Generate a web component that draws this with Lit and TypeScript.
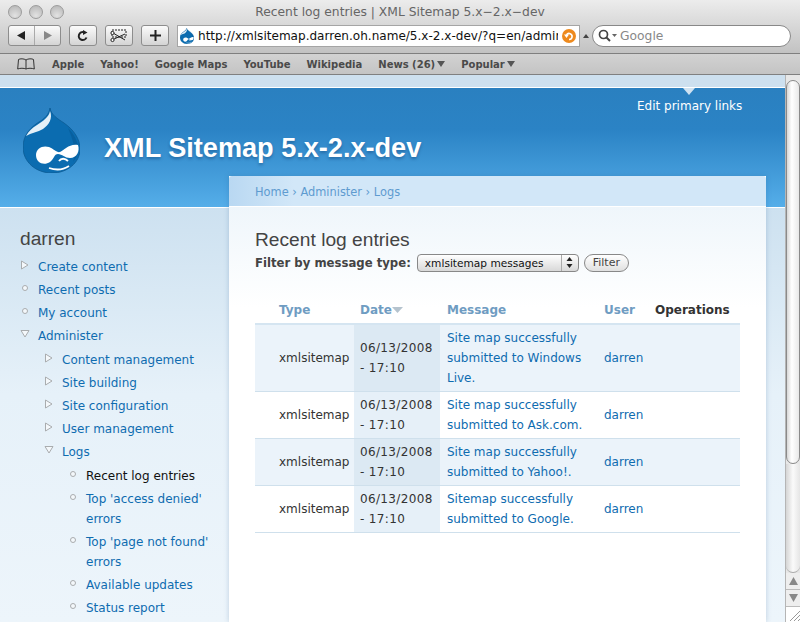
import { LitElement, html, css, svg } from "lit";
import { customElement } from "lit/decorators.js";

const drop = (w: number, h: number) => html`<svg width=${w} height=${h} viewBox="0 0 57 65" class="drop">
  <path d="M27 0 C28 7 35 11 41 15 C51 22 57 31 57 41 C57 55 44 65 29 65 C13 65 0 54 0 39 C0 27 8 19 16 14 C21 11 26 7 27 0Z" fill="#0b6cb0" stroke="#0b5a93" stroke-width=".8"/>
  <path d="M45 20 C51 26 55 33 55 41 C55 47 53 50 50 54 C53 46 52 36 45 20Z" fill="#075b98" opacity=".7"/>
  <path d="M27 3 C26 9 20 13 14 17 C9 20 6 23 3 28 C8 25 15 24 20 21 C26 17 30 10 27 3Z" fill="#e4f0f8"/>
  <path d="M13 47 C13 40 20 37 26 39 C31 41 34 45 37 44 C41 42 47 35 55 37 C57 43 54 50 47 50 C42 50 39 46 35 46 C31 46 31 51 27 54 C21 58 13 55 13 47Z" fill="#fff"/>
  <path d="M26 60 C32 62 40 62 46 58 M36 53 C38 50 42 50 45 53" fill="none" stroke="#fff" stroke-width="1.8"/>
</svg>`;

const tri = svg`<path d="M1.5 1 L8 5 L1.5 9 Z" fill="#f4f8fb" stroke="#a9acae" stroke-width="1"/>`;
const triDown = svg`<path d="M1 1.5 L9 1.5 L5 8 Z" fill="#f4f8fb" stroke="#a9acae" stroke-width="1"/>`;
const circ = svg`<circle cx="5" cy="5" r="2.5" fill="#f4f8fb" stroke="#a9acae" stroke-width="1"/>`;

type Item = { t: string; k: "r" | "d" | "c"; on?: boolean; kids?: Item[] };
const menu: Item[] = [
  { t: "Create content", k: "r" },
  { t: "Recent posts", k: "c" },
  { t: "My account", k: "c" },
  {
    t: "Administer", k: "d", kids: [
      { t: "Content management", k: "r" },
      { t: "Site building", k: "r" },
      { t: "Site configuration", k: "r" },
      { t: "User management", k: "r" },
      {
        t: "Logs", k: "d", kids: [
          { t: "Recent log entries", k: "c", on: true },
          { t: "Top 'access denied' errors", k: "c" },
          { t: "Top 'page not found' errors", k: "c" },
          { t: "Available updates", k: "c" },
          { t: "Status report", k: "c" },
        ],
      },
    ],
  },
];

const rows = [
  "Site map successfully submitted to Windows Live.",
  "Site map successfully submitted to Ask.com.",
  "Site map successfully submitted to Yahoo!.",
  "Sitemap successfully submitted to Google.",
];

@customElement("app-root")
export class AppRoot extends LitElement {
  static styles = css`
    :host { display: block; width: 800px; height: 622px; overflow: hidden; font-family: "DejaVu Sans", Verdana, sans-serif; }
    a { color: #0f6cb0; text-decoration: none; }
    .chrome { height: 75px; display: flex; flex-direction: column; }
    .top { height: 54px; box-sizing: border-box; background: linear-gradient(#ececec, #c2c2c2); border-bottom: 1px solid #7f7f7f; display: flex; flex-direction: column; }
    .title { height: 23px; display: flex; position: relative; }
    .lights { display: flex; gap: 7px; padding: 5px 0 0 8px; }
    .lights i { width: 14px; height: 14px; box-sizing: border-box; border-radius: 50%; background: radial-gradient(circle at 50% 80%, #e2e2e2, #b4b4b4); border: 1px solid #9c9c9c; }
    .ttext { position: absolute; left: 0; right: 0; top: 3px; text-align: center; font: 12.3px/18px "DejaVu Sans", sans-serif; color: #666; }
    .tools { display: flex; align-items: center; height: 25px; padding-left: 8px; }
    .btn { height: 21px; box-sizing: border-box; border: 1px solid #8d8d8d; border-radius: 3px; background: linear-gradient(#fbfbfb, #d4d4d4); display: flex; align-items: center; justify-content: center; flex: none; }
    .seg { width: 53px; margin-right: 8px; }
    .seg span { flex: 1; height: 100%; display: flex; align-items: center; justify-content: center; }
    .seg span + span { border-left: 1px solid #aaa; }
    .b28 { width: 28px; margin-right: 8px; }
    .url { width: 403px; height: 22px; flex: none; box-sizing: border-box; background: #fff; border: 1px solid #a5a5a5; display: flex; align-items: center; padding-left: 2px; gap: 4px; font: 12.05px "DejaVu Sans", sans-serif; color: #111; overflow: hidden; white-space: nowrap; }
    .url .u { flex: 1; overflow: hidden; }
    .snap { width: 14px; height: 14px; border-radius: 50%; background: #ee8a1e; margin-right: 3px; flex: none; display: flex; align-items: center; justify-content: center; }
    .caret { width: 12px; flex: none; display: flex; justify-content: center; }
    .search { width: 199px; height: 22px; flex: none; box-sizing: border-box; border: 1px solid #888; border-radius: 11px; background: #fff; display: flex; align-items: center; padding-left: 5px; gap: 2px; font: 12.3px "DejaVu Sans", sans-serif; color: #888; }
    .marks { height: 21px; box-sizing: border-box; background: linear-gradient(#d2d2d2, #c4c4c4); border-bottom: 1px solid #808080; display: flex; align-items: center; padding-left: 17px; font: bold 10px "DejaVu Sans", sans-serif; color: #4a4a4a; white-space: nowrap; }
    .marks svg.bk { margin-right: 17px; }
    .marks span { margin-right: 16px; display: flex; align-items: center; }
    .marks span svg { margin-left: 2px; }
    .view { display: flex; height: 547px; }
    .page { flex: 1; min-width: 0; overflow: hidden; background: #fff; }
    .strip { height: 12px; background: #cde0ef; border-bottom: 1px solid #fff; }
    .head { height: 120px; box-sizing: border-box; background: linear-gradient(#2a80c0 0%, #2b83c5 35%, #55aee9 100%); border-bottom: 1px solid #fff; position: relative; display: flex; align-items: flex-start; padding: 20px 0 0 23px; }
    .head .drop { flex: none; }
    .head h1 { margin: 22px 0 0 24px; font: bold 27.1px/36px "Liberation Sans", Arial, sans-serif; color: #fff; text-shadow: 0 2px 3px rgba(0,40,90,.35); white-space: nowrap; }
    .edit { position: absolute; left: 637px; top: 10px; color: #fff; font: 12px/16px "DejaVu Sans", sans-serif; white-space: nowrap; }
    .notch { position: absolute; left: 683px; top: 0; width: 0; height: 0; border: 6px solid transparent; border-top: 7px solid #cfe2f1; border-bottom: 0; }
    .body { display: grid; grid-template-columns: 229px 537px 1fr; height: 414px; background: linear-gradient(#cde1f0, #e6f1f9 45%, #edf5fb); }
    .side { padding: 21px 0 0 20px; }
    .side h2 { margin: 0 0 5px; font: 19.2px/20px "Liberation Sans", Arial, sans-serif; color: #444; }
    ul { list-style: none; margin: 0; padding: 0; font: 12px/20px "DejaVu Sans", sans-serif; }
    ul ul { padding-left: 6px; margin-top: 1px; }
    li { position: relative; padding: 3px 0 0 18px; }
    li > svg { position: absolute; left: 0; top: 6px; }
    li.on > span { color: #111; }
    .main { margin-top: -32px; position: relative; display: flex; flex-direction: column; box-shadow: 0 0 5px rgba(40,90,140,.25); height: 446px; background: #fff; }
    .crumb { height: 31px; box-sizing: border-box; background: linear-gradient(90deg, #b9d8f2, #d2e7f8 12%, #d2e7f8); border-bottom: 1px solid #fff; padding-left: 26px; font: 11.4px/33px "DejaVu Sans", sans-serif; color: #5e9bd0; border-radius: 3px 3px 0 0; }
    .crumb a { color: #5e9bd0; }
    .content { flex: 1; padding: 23px 26px 0; background: linear-gradient(#eff6fb, #fff 100px); }
    .content h2 { margin: 0; font: 19.2px/20px "Liberation Sans", Arial, sans-serif; color: #444; }
    .filter { display: flex; align-items: center; height: 21px; margin-top: 2px; font: bold 11.7px "DejaVu Sans", sans-serif; color: #444; }
    .sel { margin-left: 6px; width: 162px; height: 18px; box-sizing: border-box; border: 1px solid #888; border-radius: 4px; background: linear-gradient(#fff, #d8d8d8); display: flex; align-items: center; justify-content: space-between; padding-left: 7px; font: 10.6px "DejaVu Sans", sans-serif; color: #111; }
    .sel b { width: 16px; border-left: 1px solid #aaa; height: 100%; display: flex; align-items: center; justify-content: center; }
    .fbtn { margin-left: 5px; width: 45px; height: 18px; box-sizing: border-box; border: 1px solid #888; border-radius: 9px; background: linear-gradient(#fff, #e0e0e0); text-align: center; font: 11px/16px "DejaVu Sans", sans-serif; color: #444; }
    table { border-collapse: collapse; table-layout: fixed; width: 485px; margin-top: 24px; font: 12px/20px "DejaVu Sans", sans-serif; color: #333; }
    th { font: bold 12px/20px "DejaVu Sans", sans-serif; color: #6f9cc2; text-align: left; height: 27px; padding: 0 0 0 7px; border-bottom: 2px solid #d5e5f1; box-sizing: border-box; white-space: nowrap; }
    th:first-child { padding-left: 24px; }
    th.d { padding-left: 6px; }
    th.dark { color: #333; }
    td { padding: 3px 6px 3px 7px; border-bottom: 1px solid #cfe0ec; }
    td:first-child { padding-left: 24px; }
    tr.odd td { background: #ebf3fa; }
    td.date { background: #e6f0f8; padding-left: 6px; padding-right: 0; letter-spacing: .35px; }
    tr.odd td.date { background: #dce9f3; }
    .w1 { width: 99px; } .w2 { width: 86px; } .w3 { width: 157px; } .w4 { width: 51px; } .w5 { width: 92px; }
    .bar { width: 15px; flex: none; background: #e7e7e7; display: flex; flex-direction: column; box-sizing: border-box; border-left: 1px solid #b5b5b5; }
    .sb-cap { height: 5px; flex: none; }
    .thumb { height: 384px; flex: none; border: 1px solid #8a8a8a; border-radius: 7px; background: linear-gradient(90deg, #d8d8d8, #fff 40%, #e8e8e8); box-sizing: border-box; }
    .track { flex: 1; background: linear-gradient(90deg, #d5d5d5, #fafafa 50%, #e5e5e5); border-radius: 0 0 7px 7px; border-bottom: 1px solid #aaa; }
    .arr { height: 17px; flex: none; box-sizing: border-box; display: flex; align-items: center; justify-content: center; background: #eee; border-bottom: 1px solid #bbb; }
    .grip { height: 15px; flex: none; background: #fff; display: flex; }
  `;

  items(list: Item[]): unknown {
    return html`<ul>${list.map(
      (i) => html`<li class=${i.on ? "on" : ""}>
        <svg width="10" height="10" viewBox="0 0 10 10">${i.k === "r" ? tri : i.k === "d" ? triDown : circ}</svg>
        ${i.on ? html`<span>${i.t}</span>` : html`<a href="#">${i.t}</a>`}
        ${i.kids ? this.items(i.kids) : ""}
      </li>`
    )}</ul>`;
  }

  render() {
    const mini = html`<svg width="8" height="6" viewBox="0 0 8 6"><path d="M0 0 H8 L4 6Z" fill="#555"/></svg>`;
    return html`
      <div class="chrome">
        <div class="top">
          <div class="title">
            <div class="lights"><i></i><i></i><i></i></div>
            <div class="ttext">Recent log entries | XML Sitemap 5.x−2.x−dev</div>
          </div>
          <div class="tools">
            <div class="btn seg">
              <span><svg width="9" height="9" viewBox="0 0 9 9"><path d="M0 4.5 L8 0 V9Z" fill="#222"/></svg></span>
              <span><svg width="9" height="9" viewBox="0 0 9 9"><path d="M9 4.5 L1 0 V9Z" fill="#888"/></svg></span>
            </div>
            <div class="btn b28"><svg width="12" height="12" viewBox="0 0 12 12"><path d="M9.5 7.5 A4 4 0 1 1 7 2.2" fill="none" stroke="#222" stroke-width="2"/><path d="M6 0 L10.5 2.6 L6 5Z" fill="#222"/></svg></div>
            <div class="btn b28"><svg width="18" height="14" viewBox="0 0 18 14"><rect x="2" y="1" width="14" height="7" fill="none" stroke="#222" stroke-dasharray="2 1"/><path d="M3 10.5 L15 5 M3 4 L15 11" stroke="#222" fill="none"/><circle cx="2.5" cy="11" r="1.6" fill="#fff" stroke="#222"/><circle cx="2.5" cy="4" r="1.6" fill="#fff" stroke="#222"/></svg></div>
            <div class="btn b28"><svg width="11" height="11" viewBox="0 0 11 11"><path d="M5.5 0 V11 M0 5.5 H11" stroke="#222" stroke-width="2"/></svg></div>
            <div class="url">${drop(14, 16)}<span class="u">http://xmlsitemap.darren.oh.name/5.x-2.x-dev/?q=en/admin/logs</span><span class="snap"><svg width="12" height="12" viewBox="0 0 12 12"><path d="M3.5 5 A3 3 0 1 1 6 9.5" fill="none" stroke="#fff" stroke-width="1.6"/><path d="M1 4.5 H6 L3.5 8Z" fill="#fff"/></svg></span></div>
            <span class="caret"><svg width="6" height="4" viewBox="0 0 6 4"><path d="M3 0 L6 4 H0Z" fill="#444"/></svg></span>
            <div class="search"><svg width="20" height="13" viewBox="0 0 20 13"><circle cx="5.5" cy="5.5" r="4" fill="none" stroke="#444" stroke-width="1.7"/><path d="M8.5 8.5 L12 12" stroke="#444" stroke-width="2"/><path d="M14 5 H19 L16.5 8Z" fill="#666"/></svg><span>Google</span></div>
          </div>
        </div>
        <div class="marks">
          <svg class="bk" width="18" height="12" viewBox="0 0 18 12"><path d="M9 2 C7 .5 3 .5 1.5 1.5 L.7 11 C3 10 7 10 9 11 C11 10 15 10 17.3 11 L16.5 1.5 C15 .5 11 .5 9 2 V11" fill="none" stroke="#333"/></svg>
          <span>Apple</span><span>Yahoo!</span><span>Google Maps</span><span>YouTube</span><span>Wikipedia</span><span>News (26)${mini}</span><span>Popular${mini}</span>
        </div>
      </div>
      <div class="view">
        <div class="page">
          <div class="strip"></div>
          <div class="head">
            ${drop(57, 65)}
            <h1>XML Sitemap 5.x-2.x-dev</h1>
            <div class="notch"></div>
            <div class="edit">Edit primary links</div>
          </div>
          <div class="body">
            <div class="side">
              <h2>darren</h2>
              ${this.items(menu)}
            </div>
            <div class="main">
              <div class="crumb"><a href="#">Home</a> › <a href="#">Administer</a> › <a href="#">Logs</a></div>
              <div class="content">
                <h2>Recent log entries</h2>
                <div class="filter">Filter by message type:
                  <div class="sel">xmlsitemap messages<b><svg width="7" height="11" viewBox="0 0 7 11"><path d="M3.5 0 L6.5 4 H.5Z M3.5 11 L6.5 7 H.5Z" fill="#222"/></svg></b></div>
                  <div class="fbtn">Filter</div>
                </div>
                <table>
                  <colgroup><col class="w1"/><col class="w2"/><col class="w3"/><col class="w4"/><col class="w5"/></colgroup>
                  <thead><tr><th>Type</th><th class="d">Date<svg width="11" height="7" viewBox="0 0 11 7"><path d="M0 0 H11 L5.5 6Z" fill="#b5c3ce"/></svg></th><th>Message</th><th>User</th><th class="dark">Operations</th></tr></thead>
                  <tbody>
                    ${rows.map((r, i) => html`<tr class=${i % 2 === 0 ? "odd" : ""}>
                      <td>xmlsitemap</td>
                      <td class="date">06/13/2008 - 17:10</td>
                      <td><a href="#">${r}</a></td>
                      <td><a href="#">darren</a></td>
                      <td></td>
                    </tr>`)}
                  </tbody>
                </table>
              </div>
            </div>
            <div></div>
          </div>
        </div>
        <div class="bar">
          <div class="sb-cap"></div>
          <div class="thumb"></div>
          <div class="track"></div>
          <div class="arr"><svg width="9" height="8" viewBox="0 0 9 8"><path d="M4.5 0 L9 8 H0Z" fill="#888"/></svg></div>
          <div class="arr"><svg width="9" height="8" viewBox="0 0 9 8"><path d="M4.5 8 L9 0 H0Z" fill="#888"/></svg></div>
          <div class="grip"><svg width="14" height="14" viewBox="0 0 14 14"><path d="M4 14 L14 4 M8 14 L14 8 M12 14 L14 12" stroke="#999"/></svg></div>
        </div>
      </div>
    `;
  }
}
